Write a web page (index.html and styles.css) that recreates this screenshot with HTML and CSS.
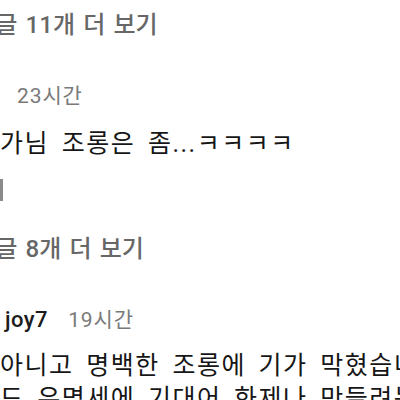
FILE: index.html
```html
<!DOCTYPE html>
<html lang="ko">
<head>
    <meta charset="UTF-8">
    <meta name="viewport" content="width=device-width, initial-scale=1.0">
    <title>댓글</title>
    <link rel="stylesheet" href="styles.css">
</head>
<body>
    <div class="thread">
        <a class="more first" href="#">답글 11개 더 보기</a>

        <div class="comment">
            <div class="meta">
                <span class="time">23시간</span>
            </div>
            <p class="text">가님 조롱은 좀...ㅋㅋㅋㅋ</p>
            <div class="actions"><span class="bar"></span></div>
        </div>

        <a class="more" href="#">답글 8개 더 보기</a>

        <div class="comment">
            <div class="meta">
                <span class="name">joy7</span>
                <span class="time">19시간</span>
            </div>
            <p class="text">아니고 명백한 조롱에 기가 막혔습니다<br>드 유명세에 기대어 화제나 만들려는</p>
        </div>
    </div>
</body>
</html>
```

FILE: styles.css
```css
body {
    margin: 0;
    background: #fff;
    font-family: Roboto, "Noto Sans CJK KR", sans-serif;
    overflow: hidden;
    height: 400px;
}
.thread {
    display: flex;
    flex-direction: column;
    align-items: flex-start;
    padding-top: 10px;
    white-space: nowrap;
}
.more {
    display: block;
    margin-left: -27px;
    font-size: 24px;
    line-height: 30px;
    font-weight: 500;
    letter-spacing: 0.1px;
    word-spacing: 2px;
    color: #676767;
    text-decoration: none;
}
.more:not(.first) {
    margin-top: 33px;
}
.comment {
    margin-top: 43px;
}
.meta {
    display: flex;
    align-items: baseline;
    gap: 20px;
    padding-left: 17px;
    line-height: 26px;
}
.name {
    margin-left: -12px;
    font-size: 22px;
    font-weight: 500;
    letter-spacing: 0.5px;
    color: #1c1c1c;
}
.time {
    font-size: 21px;
    letter-spacing: 0.9px;
    color: #7a7a7a;
}
.text {
    margin: 18px 0 0;
    font-size: 25px;
    line-height: 33px;
    letter-spacing: 1.5px;
    word-spacing: 5px;
    color: #161616;
}
.comment:last-child .text {
    margin-top: 16px;
}
.actions {
    margin-top: 19px;
    height: 22px;
}
.bar {
    display: block;
    width: 3px;
    height: 22px;
    background: #8a8a8a;
}
```
